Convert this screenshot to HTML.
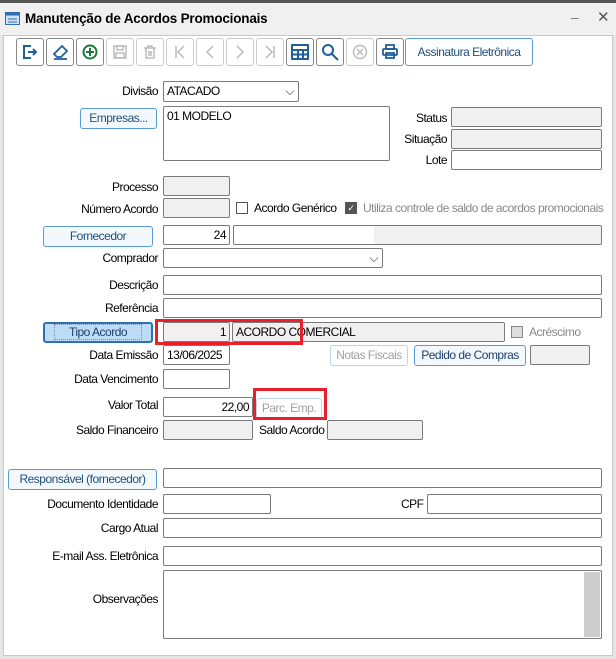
<!DOCTYPE html>
<html><head><meta charset="utf-8"><style>
*{box-sizing:border-box;margin:0;padding:0}
body{width:616px;height:659px;background:#e6e6e6;font-family:"Liberation Sans",sans-serif;font-size:12px;color:#000;position:relative;overflow:hidden;letter-spacing:-0.5px}
.a{position:absolute}
.f{position:absolute;border:1px solid #7a7a7a;border-radius:2px;background:#fff;height:20px;line-height:18px;padding:0 3px;white-space:nowrap}
.g{background:#f0f0f0}
.r{text-align:right}
.l{position:absolute;text-align:right;white-space:nowrap;width:150px}
.b{position:absolute;border:1px solid #5b9bd5;border-radius:3px;background:#f3f8fd;height:21px;line-height:19px;text-align:center;color:#1f4e79;white-space:nowrap}
.bd{color:#a0a0a0;border-color:#bcd3ec;background:#fff}
.t{position:absolute;top:38px;width:28px;height:28px;border:1px solid #888;border-radius:3px;background:#fff;display:flex;align-items:center;justify-content:center}
.t.d{border-color:#ccc}
.red{position:absolute;border:3px solid #e8202a}
.cb{position:absolute;width:12px;height:12px;border:1px solid #555;background:#fff}
</style></head><body>
<div class="a" style="left:0;top:0;width:616px;height:3px;background:#555"></div>
<div class="a" style="left:0;top:3px;width:616px;height:32px;background:#f0f0f0"></div>
<svg class="a" style="left:5px;top:12px" width="15" height="13"><rect x="0.5" y="0.5" width="14" height="12" fill="#cfe3f7" stroke="#2c6fb5"/><rect x="0.5" y="0.5" width="14" height="3" fill="#2c6fb5"/><line x1="3" y1="7" x2="12" y2="7" stroke="#2c6fb5"/><line x1="3" y1="10" x2="12" y2="10" stroke="#2c6fb5"/></svg>
<div class="a" style="left:25px;top:11px;font-size:13.5px;font-weight:bold;letter-spacing:-0.2px">Manutenção de Acordos Promocionais</div>
<div class="a" style="left:571px;top:9px;color:#777;font-size:14px">–</div>
<div class="a" style="left:597px;top:8px;color:#555;font-size:15px">✕</div>
<div class="a" style="left:3px;top:35px;width:610px;height:621px;background:#fff;border:1px solid #c8c8c8"></div>

<div class="t" style="left:16px"><svg width="16" height="16" fill="none" stroke="#1f5f9a" stroke-width="2"><path d="M9 2H2v12h7M6 8h8M11 5l3 3-3 3"/></svg></div>
<div class="t" style="left:46px"><svg width="16" height="16" fill="none" stroke="#1f5f9a" stroke-width="1.8"><path d="M10 2l5 5-6 6H5L2 10zM2 15h13"/></svg></div>
<div class="t" style="left:76px"><svg width="16" height="16" fill="none" stroke="#1a7a3a" stroke-width="2"><circle cx="8" cy="8" r="6.5"/><path d="M8 4v8M4 8h8"/></svg></div>
<div class="t d" style="left:106px"><svg width="16" height="16" fill="none" stroke="#bbb" stroke-width="1.5"><rect x="2" y="2" width="12" height="12"/><rect x="5" y="2" width="6" height="4"/><rect x="4" y="9" width="8" height="5"/></svg></div>
<div class="t d" style="left:136px"><svg width="16" height="16" fill="none" stroke="#bbb" stroke-width="1.5"><path d="M2 4h12M6 4V2h4v2M4 4v10h8V4M7 7v5M9 7v5"/></svg></div>
<div class="t d" style="left:166px"><svg width="16" height="16" fill="none" stroke="#bbb" stroke-width="1.5"><path d="M4 2v12M12 2L6 8l6 6"/></svg></div>
<div class="t d" style="left:196px"><svg width="16" height="16" fill="none" stroke="#bbb" stroke-width="1.5"><path d="M11 2L5 8l6 6"/></svg></div>
<div class="t d" style="left:226px"><svg width="16" height="16" fill="none" stroke="#bbb" stroke-width="1.5"><path d="M5 2l6 6-6 6"/></svg></div>
<div class="t d" style="left:256px"><svg width="16" height="16" fill="none" stroke="#bbb" stroke-width="1.5"><path d="M12 2v12M4 2l6 6-6 6"/></svg></div>
<div class="t" style="left:286px"><svg width="18" height="16" fill="none" stroke="#1f5f9a" stroke-width="2"><rect x="1" y="1" width="16" height="14"/><path d="M1 6h16M1 10.5h16M7 6v9M12 6v9"/></svg></div>
<div class="t" style="left:316px"><svg width="18" height="18" fill="none" stroke="#1f5f9a" stroke-width="2"><circle cx="7" cy="7" r="5"/><path d="M11 11l6 6"/></svg></div>
<div class="t d" style="left:346px"><svg width="16" height="16" fill="none" stroke="#bbb" stroke-width="1.5"><circle cx="8" cy="8" r="6.5"/><path d="M5 5l6 6M11 5l-6 6"/></svg></div>
<div class="t" style="left:376px"><svg width="16" height="16" fill="none" stroke="#1f5f9a" stroke-width="1.8"><rect x="4" y="1" width="8" height="4"/><rect x="1" y="5" width="14" height="6" rx="1"/><rect x="4" y="9" width="8" height="5"/></svg></div>
<div class="b" style="left:405px;top:38px;width:128px;height:28px;line-height:26px;background:#fff">Assinatura Eletrônica</div>

<div class="l" style="left:8px;top:84px">Divisão</div>
<div class="f" style="left:163px;top:81px;width:136px;height:21px">ATACADO<span class="a" style="right:4px;top:0;color:#333">⌵</span></div>
<div class="b" style="left:80px;top:108px;width:77px">Empresas...</div>
<div class="f" style="left:163px;top:106px;width:227px;height:55px">01 MODELO</div>
<div class="l" style="left:297px;top:111px">Status</div><div class="f g" style="left:451px;top:107px;width:151px"></div>
<div class="l" style="left:297px;top:132px">Situação</div><div class="f g" style="left:451px;top:129px;width:151px"></div>
<div class="l" style="left:297px;top:153px">Lote</div><div class="f" style="left:451px;top:150px;width:151px"></div>

<div class="l" style="left:8px;top:180px">Processo</div><div class="f g" style="left:163px;top:176px;width:67px"></div>
<div class="l" style="left:8px;top:202px">Número Acordo</div><div class="f g" style="left:163px;top:198px;width:67px"></div>
<div class="cb" style="left:236px;top:202px"></div><div class="a" style="left:254px;top:201px">Acordo Genérico</div>
<div class="cb" style="left:345px;top:202px;background:#555;color:#fff;font-size:9px;line-height:10px;text-align:center">✓</div><div class="a" style="left:363px;top:201px;color:#888">Utiliza controle de saldo de acordos promocionais</div>

<div class="b" style="left:43px;top:226px;width:110px">Fornecedor</div>
<div class="f r" style="left:163px;top:225px;width:67px">24</div>
<div class="f g" style="left:233px;top:225px;width:369px;background:linear-gradient(90deg,#fff 140px,#f0f0f0 140px)"></div>
<div class="l" style="left:8px;top:251px">Comprador</div>
<div class="f" style="left:163px;top:248px;width:220px"><span class="a" style="right:4px;top:0;color:#333">⌵</span></div>
<div class="l" style="left:8px;top:278px">Descrição</div><div class="f" style="left:163px;top:275px;width:439px"></div>
<div class="l" style="left:8px;top:301px">Referência</div><div class="f" style="left:163px;top:298px;width:439px"></div>

<div class="b" style="left:43px;top:322px;width:110px;background:#bcdcf7;border:2px solid #2f6fb3;line-height:17px;color:#1f3f6f"><span style="outline:1px dotted #b08a30;padding:0 14px">Tipo Acordo</span></div>
<div class="f g r" style="left:163px;top:322px;width:67px">1</div>
<div class="f g" style="left:232px;top:322px;width:273px">ACORDO COMERCIAL</div>
<div class="red" style="left:155px;top:319px;width:148px;height:26px"></div>
<div class="cb" style="left:511px;top:326px;background:#ddd;border-color:#888"></div><div class="a" style="left:529px;top:325px;color:#888">Acréscimo</div>

<div class="l" style="left:8px;top:348px">Data Emissão</div><div class="f" style="left:163px;top:345px;width:67px">13/06/2025</div>
<div class="b bd" style="left:330px;top:345px;width:78px">Notas Fiscais</div>
<div class="b" style="left:414px;top:345px;width:112px;color:#1f3f6f">Pedido de Compras</div>
<div class="f g" style="left:530px;top:345px;width:60px"></div>
<div class="l" style="left:8px;top:372px">Data Vencimento</div><div class="f" style="left:163px;top:369px;width:67px"></div>
<div class="l" style="left:8px;top:398px">Valor Total</div><div class="f r" style="left:163px;top:397px;width:90px">22,00</div>
<div class="b bd" style="left:256px;top:398px;width:66px">Parc. Emp.</div>
<div class="red" style="left:253px;top:388px;width:74px;height:32px"></div>
<div class="l" style="left:8px;top:423px">Saldo Financeiro</div><div class="f g" style="left:163px;top:420px;width:90px"></div>
<div class="a" style="left:259px;top:423px">Saldo Acordo</div><div class="f g" style="left:327px;top:420px;width:96px"></div>

<div class="b" style="left:8px;top:469px;width:149px">Responsável (fornecedor)</div>
<div class="f" style="left:163px;top:468px;width:439px"></div>
<div class="l" style="left:8px;top:497px">Documento Identidade</div><div class="f" style="left:163px;top:494px;width:108px"></div>
<div class="a" style="left:401px;top:497px">CPF</div><div class="f" style="left:427px;top:494px;width:175px"></div>
<div class="l" style="left:8px;top:521px">Cargo Atual</div><div class="f" style="left:163px;top:518px;width:439px"></div>
<div class="l" style="left:8px;top:549px">E-mail Ass. Eletrônica</div><div class="f" style="left:163px;top:546px;width:439px"></div>
<div class="l" style="left:8px;top:592px">Observações</div>
<div class="f" style="left:163px;top:570px;width:439px;height:69px"><div class="a" style="right:1px;top:1px;width:16px;height:65px;background:#cdcdcd"></div></div>
</body></html>
